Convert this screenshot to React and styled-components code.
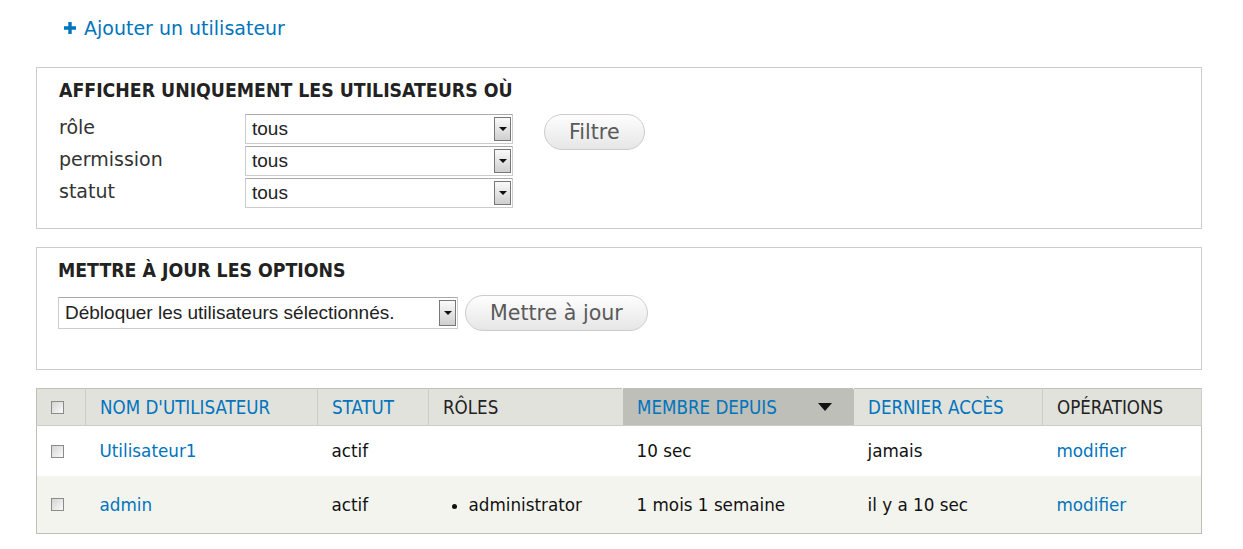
import React from "react"
import styled, { createGlobalStyle } from "styled-components"

const GlobalStyle = createGlobalStyle`
  body {
    margin: 0;
    background: #fff;
    font-family: "DejaVu Sans", Verdana, sans-serif;
    font-size: 19px;
    color: #222;
  }
`

const Page = styled.div`
  width: 1166px;
  margin-left: 36px;
  padding-top: 14px;
`

const AddLink = styled.a`
  display: inline-flex;
  align-items: center;
  gap: 8px;
  margin-left: 28px;
  color: #0074bd;
  text-decoration: none;
  line-height: 28px;
`

const Fieldset = styled.div`
  border: 1px solid #ccc;
  padding: ${props => props.pad || "12px 22px 20px"};
  margin-top: ${props => props.top || "0"}px;
`

const Legend = styled.div`
  font-family: "DejaVu Sans Condensed", "DejaVu Sans", sans-serif;
  font-weight: 700;
  font-size: 19.3px;
  line-height: 22px;
  text-transform: uppercase;
  color: #222;
  margin-bottom: ${props => props.gap || 12}px;
`

const FilterArea = styled.div`
  display: flex;
  align-items: flex-start;
  gap: 31px;
`

const FilterRows = styled.div`
  display: flex;
  flex-direction: column;
  gap: 2px;
`

const FilterRow = styled.div`
  display: flex;
  align-items: center;
`

const Label = styled.label`
  width: 186px;
  color: #333;
  line-height: 22px;
  margin-top: -4px;
`

const SelectBox = styled.div`
  position: relative;
  box-sizing: border-box;
  width: ${props => props.w}px;
  height: ${props => props.h || 30}px;
  border: 1px solid #ccc;
  border-top-color: #aaa;
  background: #fff;
  font-family: "Liberation Sans", Arial, sans-serif;
  font-size: 19px;
  color: #222;
  display: flex;
  align-items: center;
  padding-left: 6px;
`

const ArrowBtn = styled.span`
  position: absolute;
  right: 1px;
  top: 2px;
  bottom: 2px;
  width: 15px;
  border: 1px solid #777;
  background: linear-gradient(#fafafa, #cfcfcf);
  display: flex;
  align-items: center;
  justify-content: center;
  &::after {
    content: "";
    border-left: 4px solid transparent;
    border-right: 4px solid transparent;
    border-top: 4px solid #111;
  }
`

const Button = styled.button`
  box-sizing: border-box;
  height: 36px;
  padding: 0 24px;
  border: 1px solid #ccc;
  border-radius: 18px;
  background: linear-gradient(#fefefe, #e6e6e6);
  font-family: "DejaVu Sans", Verdana, sans-serif;
  font-size: 20.6px;
  color: #5a5a5a;
  cursor: pointer;
`

const UpdateRow = styled.div`
  display: flex;
  align-items: center;
  gap: 7px;
`

const Table = styled.table`
  width: 100%;
  margin-top: 18px;
  border-collapse: collapse;
  table-layout: fixed;
  border: 1px solid #bebfb9;
`

const Th = styled.th`
  height: 36px;
  padding: 0 0 0 14px;
  text-align: left;
  font-family: "DejaVu Sans Condensed", "DejaVu Sans", sans-serif;
  font-weight: 400;
  font-size: 18.6px;
  background: ${props => (props.active ? "#bebfb9" : "#e1e2dc")};
  color: ${props => (props.link ? "#0074bd" : "#222")};
  border-bottom: 1px solid #ccc;
  border-right: 1px solid ${props => (props.noline ? "transparent" : "#ccc")};
`

const SortHead = styled.div`
  display: flex;
  align-items: center;
  justify-content: space-between;
  padding-right: 21px;
`

const Row = styled.tr`
  background: ${props => (props.even ? "#f3f4ee" : "#fff")};
`

const Td = styled.td`
  height: ${props => props.h}px;
  padding: 0 0 0 14px;
  font-size: 16.8px;
  color: ${props => (props.link ? "#0074bd" : "#111")};
`

const Check = styled.span`
  display: block;
  box-sizing: border-box;
  width: 13px;
  height: 13px;
  border: 1px solid #8a8a8a;
  background: linear-gradient(135deg, #d4d4d4, #fafafa);
`

const RoleList = styled.ul`
  margin: 0;
  padding-left: 26px;
  list-style: disc;
`

const PlusIcon = () => (
  <svg width="12" height="12" viewBox="0 0 12 12">
    <path d="M4.3 0h3.4v4.3H12v3.4H7.7V12H4.3V7.7H0V4.3h4.3z" fill="#0074bd" />
  </svg>
)

const SortArrow = () => (
  <svg width="14" height="8" viewBox="0 0 14 8">
    <path d="M0 0h14L7 8z" fill="#111" />
  </svg>
)

const filters = ["rôle", "permission", "statut"]

const users = [
  { name: "Utilisateur1", status: "actif", roles: [], since: "10 sec", access: "jamais", h: 50 },
  { name: "admin", status: "actif", roles: ["administrator"], since: "1 mois 1 semaine", access: "il y a 10 sec", h: 57 },
]

function App() {
  return (
    <Page>
      <GlobalStyle />
      <AddLink href="#">
        <PlusIcon />
        Ajouter un utilisateur
      </AddLink>

      <Fieldset top={25}>
        <Legend>Afficher uniquement les utilisateurs où</Legend>
        <FilterArea>
          <FilterRows>
            {filters.map(f => (
              <FilterRow key={f}>
                <Label>{f}</Label>
                <SelectBox w={268}>
                  tous
                  <ArrowBtn />
                </SelectBox>
              </FilterRow>
            ))}
          </FilterRows>
          <Button>Filtre</Button>
        </FilterArea>
      </Fieldset>

      <Fieldset top={18} pad="12px 22px 38px 21px">
        <Legend gap={13}>Mettre à jour les options</Legend>
        <UpdateRow>
          <SelectBox w={400} h={32}>
            Débloquer les utilisateurs sélectionnés.
            <ArrowBtn />
          </SelectBox>
          <Button>Mettre à jour</Button>
        </UpdateRow>
      </Fieldset>

      <Table>
        <colgroup>
          <col style={{ width: 49 }} />
          <col style={{ width: 232 }} />
          <col style={{ width: 111 }} />
          <col style={{ width: 194 }} />
          <col style={{ width: 231 }} />
          <col style={{ width: 189 }} />
          <col />
        </colgroup>
        <thead>
          <tr>
            <Th><Check /></Th>
            <Th link>NOM D'UTILISATEUR</Th>
            <Th link>STATUT</Th>
            <Th noline>RÔLES</Th>
            <Th link active noline>
              <SortHead>
                MEMBRE DEPUIS
                <SortArrow />
              </SortHead>
            </Th>
            <Th link>DERNIER ACCÈS</Th>
            <Th>OPÉRATIONS</Th>
          </tr>
        </thead>
        <tbody>
          {users.map((u, i) => (
            <Row key={u.name} even={i % 2 === 1}>
              <Td h={u.h}><Check /></Td>
              <Td h={u.h} link>{u.name}</Td>
              <Td h={u.h}>{u.status}</Td>
              <Td h={u.h}>
                {u.roles.length > 0 && (
                  <RoleList>
                    {u.roles.map(r => <li key={r}>{r}</li>)}
                  </RoleList>
                )}
              </Td>
              <Td h={u.h}>{u.since}</Td>
              <Td h={u.h}>{u.access}</Td>
              <Td h={u.h} link>modifier</Td>
            </Row>
          ))}
        </tbody>
      </Table>
    </Page>
  )
}

export default App
